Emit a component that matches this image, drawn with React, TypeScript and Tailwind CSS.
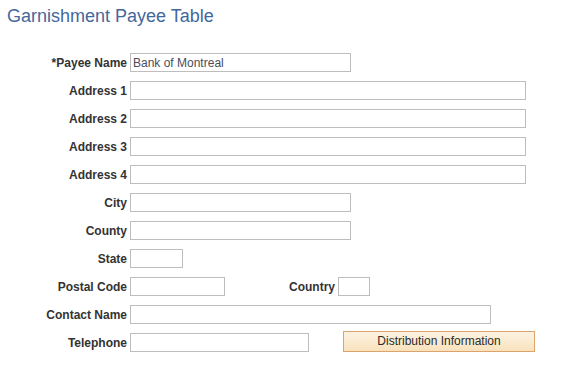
import React from "react";

const font = { fontFamily: '"Liberation Sans", Arial, sans-serif' };

function Label({ children }: { children: React.ReactNode }) {
  return (
    <div className="w-[127px] shrink-0 pt-[2px] text-right text-[12px] font-bold leading-[17px] text-[#333333]">
      {children}
    </div>
  );
}

function Input({ w, value }: { w: string; value?: string }) {
  return (
    <div
      className={`${w} h-[19px] shrink-0 border border-[#bdbdbd] bg-white px-[2px] pt-[1px] text-[12px] leading-[16px] text-[#4d4d5a]`}
    >
      {value}
    </div>
  );
}

function Row({ label, children }: { label: string; children: React.ReactNode }) {
  return (
    <div className="flex h-[19px] items-center gap-[3px]">
      <Label>{label}</Label>
      {children}
    </div>
  );
}

export default function App() {
  return (
    <div className="h-[371px] w-[573px] bg-white" style={font}>
      <div className="px-[7px] pt-[5px] text-[18px] leading-[22px] text-[#44679c]">
        Garnishment Payee Table
      </div>
      <div className="mt-[26px] flex flex-col gap-[9px]">
        <Row label="*Payee Name">
          <Input w="w-[221px]" value="Bank of Montreal" />
        </Row>
        <Row label="Address 1">
          <Input w="w-[396px]" />
        </Row>
        <Row label="Address 2">
          <Input w="w-[396px]" />
        </Row>
        <Row label="Address 3">
          <Input w="w-[396px]" />
        </Row>
        <Row label="Address 4">
          <Input w="w-[396px]" />
        </Row>
        <Row label="City">
          <Input w="w-[221px]" />
        </Row>
        <Row label="County">
          <Input w="w-[221px]" />
        </Row>
        <Row label="State">
          <Input w="w-[53px]" />
        </Row>
        <Row label="Postal Code">
          <Input w="w-[95px]" />
          <div className="w-[107px] shrink-0 pt-[2px] text-right text-[12px] font-bold leading-[17px] text-[#333333]">
            Country
          </div>
          <Input w="w-[32px]" />
        </Row>
        <Row label="Contact Name">
          <Input w="w-[361px]" />
        </Row>
        <Row label="Telephone">
          <Input w="w-[179px]" />
          <button
            type="button"
            className="ml-[31px] -mt-[3px] h-[21px] w-[192px] shrink-0 border border-[#dca36a] bg-gradient-to-b from-[#fdf3e3] to-[#f9e2bc] text-[12px] leading-[19px] text-[#2b2b2b]"
          >
            Distribution Information
          </button>
        </Row>
      </div>
    </div>
  );
}
